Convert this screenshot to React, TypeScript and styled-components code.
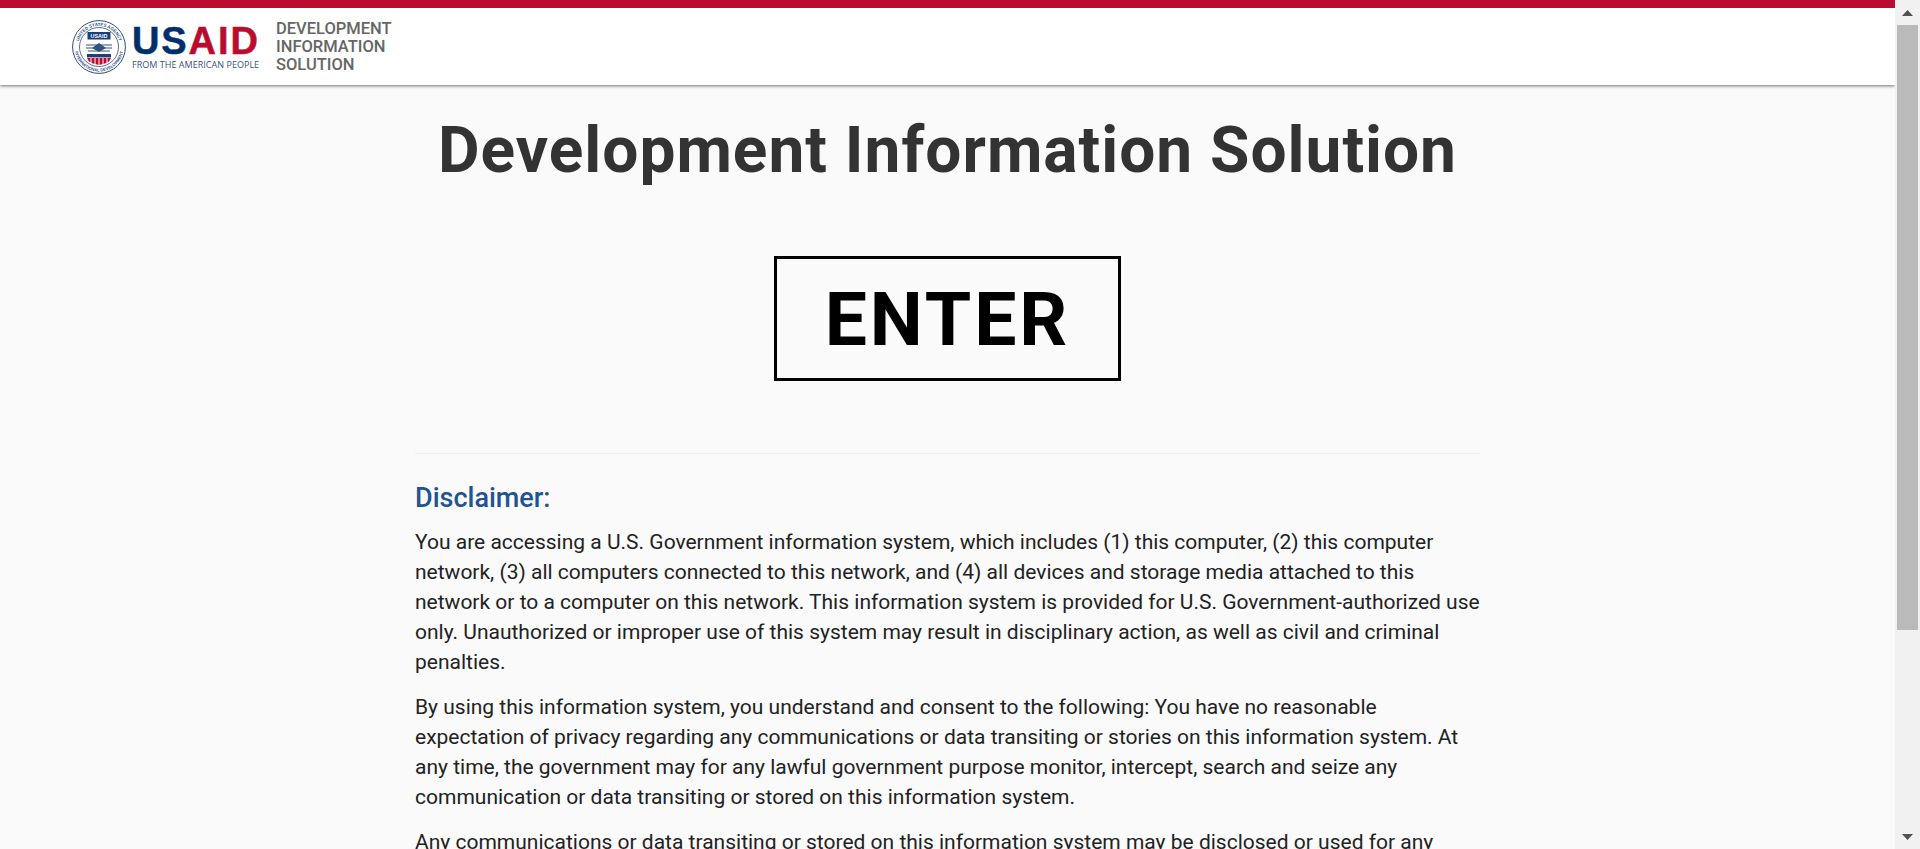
import React from "react";
import styled, { createGlobalStyle } from "styled-components";

const GlobalStyle = createGlobalStyle`
  html, body {
    margin: 0;
    height: 100%;
    overflow: hidden;
  }
  #root {
    height: 100%;
  }
`;

const Shell = styled.div`
  display: flex;
  height: 100vh;
  background: #fafafa;
  font-family: Roboto, "Liberation Sans", sans-serif;
`;

const Page = styled.div`
  flex: 1;
  min-width: 0;
  overflow-y: auto;
  scrollbar-width: none;
`;

const TopBar = styled.header`
  display: flex;
  align-items: center;
  gap: 17px;
  height: 77px;
  padding-left: 72px;
  background: #fff;
  border-top: 8px solid #ba0c2f;
  box-shadow: 0 1px 3px rgba(0, 0, 0, 0.55);
`;

const Logo = styled.div`
  display: flex;
  align-items: center;
  gap: 6px;
`;

const Wordmark = styled.div`
  display: flex;
  flex-direction: column;
  width: 127px;
  padding-top: 3px;
`;

const Usaid = styled.div`
  font-family: "Liberation Sans", Arial, sans-serif;
  font-size: 38px;
  font-weight: 700;
  line-height: 29px;
  letter-spacing: 1.9px;
  color: #002f6c;
  white-space: nowrap;
  -webkit-text-stroke: 0.5px currentColor;

  span {
    color: #ba0c2f;
  }
`;

const Tagline = styled.div`
  margin-top: 3px;
  font-family: "Open Sans", sans-serif;
  font-size: 9px;
  line-height: 11px;
  letter-spacing: 0.03px;
  color: #36527f;
  white-space: nowrap;
`;

const AppName = styled.div`
  margin-top: 1px;
  font-size: 16.5px;
  font-weight: 500;
  line-height: 18px;
  color: #666;
  text-transform: uppercase;
`;

const Content = styled.main`
  width: 1065px;
  margin: 0 auto;
  padding-bottom: 60px;
`;

const Title = styled.h1`
  margin: 31px 0 0;
  font-size: 64px;
  font-weight: 700;
  line-height: 70px;
  letter-spacing: 1px;
  text-align: center;
  color: #333;
`;

const EnterRow = styled.div`
  display: flex;
  justify-content: center;
  margin-top: 70px;
`;

const EnterButton = styled.button`
  width: 347px;
  height: 125px;
  padding: 0;
  border: 3px solid #000;
  background: transparent;
  font-family: inherit;
  font-size: 75px;
  font-weight: 700;
  letter-spacing: 3px;
  color: #000;
  cursor: pointer;
`;

const Rule = styled.hr`
  height: 1px;
  margin: 72px 0 0;
  border: 0;
  background: #eee;
`;

const Heading = styled.h2`
  margin: 29px 0 14px;
  font-size: 27px;
  font-weight: 500;
  line-height: 30px;
  color: #1f5493;
`;

const Paragraph = styled.p`
  margin: 0 0 15px;
  font-size: 21px;
  line-height: 30px;
  color: #222;
`;

const ScrollTrack = styled.div`
  display: flex;
  flex-direction: column;
  flex: none;
  width: 25px;
  background: #f1f1f1;
`;

const ArrowSlot = styled.div`
  display: flex;
  align-items: center;
  justify-content: center;
  height: 25px;
  flex: none;
`;

const Thumb = styled.div`
  height: 605px;
  margin: 0 2px;
  background: #bababa;
`;

const ThumbGap = styled.div`
  flex: 1;
`;

const Seal = () => (
  <svg width="54" height="54" viewBox="0 0 54 54">
    <defs>
      <path id="sealTop" d="M6 27 A21 21 0 0 1 48 27" />
      <path id="sealBottom" d="M2.5 27 A24.5 24.5 0 0 0 51.5 27" />
    </defs>
    <circle cx="27" cy="27" r="26.4" fill="#fff" stroke="#2f4f80" strokeWidth="1" />
    <circle cx="27" cy="27" r="19.5" fill="#fff" stroke="#2f4f80" strokeWidth="0.8" />
    <text fontFamily="'Liberation Sans', sans-serif" fontSize="4.4" fontWeight="700" fill="#33507f">
      <textPath href="#sealTop" startOffset="50%" textAnchor="middle">
        UNITED STATES AGENCY
      </textPath>
    </text>
    <text fontFamily="'Liberation Sans', sans-serif" fontSize="4.2" fontWeight="700" fill="#33507f">
      <textPath href="#sealBottom" startOffset="50%" textAnchor="middle">
        INTERNATIONAL DEVELOPMENT
      </textPath>
    </text>
    <rect x="15.5" y="12" width="23" height="7.5" fill="#1b3f78" />
    <text
      x="27"
      y="18"
      textAnchor="middle"
      fontFamily="'Liberation Sans', sans-serif"
      fontSize="5.4"
      fontWeight="700"
      fill="#fff"
    >
      USAID
    </text>
    <path d="M14 25 H40 M14 28 H40 M16 31 H38" stroke="#33507f" strokeWidth="1.1" />
    <path d="M20 28 L27 23 L34 28 L27 32 Z" fill="#33507f" />
    <rect x="15" y="34" width="24" height="3.4" fill="#1b3f78" />
    <path d="M15 38 H39 L37 41.5 L33 43.5 L27 45 L21 43.5 L17 41.5 Z" fill="#ba0c2f" />
    <path d="M19 38 V44 M23 38 V45 M27 38 V46 M31 38 V45 M35 38 V44" stroke="#fff" strokeWidth="1" />
  </svg>
);

const Arrow = ({ down }: { down?: boolean }) => (
  <svg width="11" height="6" viewBox="0 0 11 6">
    <path d={down ? "M0 0 H11 L5.5 6 Z" : "M5.5 0 L11 6 H0 Z"} fill="#505050" />
  </svg>
);

const App = () => {
  return (
    <Shell>
      <GlobalStyle />
      <Page>
        <TopBar>
          <Logo>
            <Seal />
            <Wordmark>
              <Usaid>
                US<span>AID</span>
              </Usaid>
              <Tagline>FROM THE AMERICAN PEOPLE</Tagline>
            </Wordmark>
          </Logo>
          <AppName>
            Development
            <br />
            Information
            <br />
            Solution
          </AppName>
        </TopBar>
        <Content>
          <Title>Development Information Solution</Title>
          <EnterRow>
            <EnterButton>ENTER</EnterButton>
          </EnterRow>
          <Rule />
          <Heading>Disclaimer:</Heading>
          <Paragraph>
            You are accessing a U.S. Government information system, which includes (1) this computer, (2) this
            computer network, (3) all computers connected to this network, and (4) all devices and storage media
            attached to this network or to a computer on this network. This information system is provided for U.S.
            Government-authorized use only. Unauthorized or improper use of this system may result in disciplinary
            action, as well as civil and criminal penalties.
          </Paragraph>
          <Paragraph>
            By using this information system, you understand and consent to the following: You have no reasonable
            expectation of privacy regarding any communications or data transiting or stories on this information
            system. At any time, the government may for any lawful government purpose monitor, intercept, search and
            seize any communication or data transiting or stored on this information system.
          </Paragraph>
          <Paragraph>
            Any communications or data transiting or stored on this information system may be disclosed or used for any
            lawful government purpose.
          </Paragraph>
        </Content>
      </Page>
      <ScrollTrack>
        <ArrowSlot>
          <Arrow />
        </ArrowSlot>
        <Thumb />
        <ThumbGap />
        <ArrowSlot>
          <Arrow down />
        </ArrowSlot>
      </ScrollTrack>
    </Shell>
  );
};

export default App;
